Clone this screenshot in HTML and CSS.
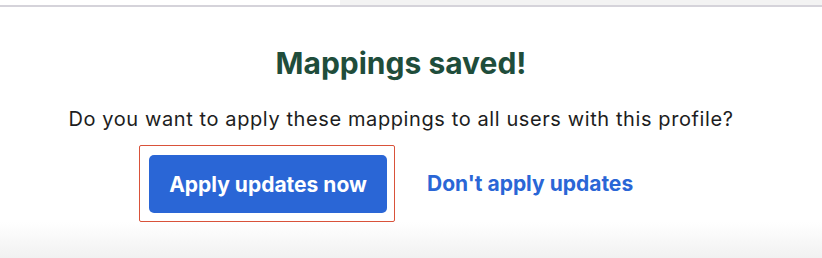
FILE: index.html
```html
<!DOCTYPE html>
<html lang="en">
<head>
  <meta charset="UTF-8">
  <title>Mappings saved</title>
  <link rel="stylesheet" href="styles.css">
</head>
<body>

<!-- top strip -->
<div class="topbar">
  <div class="topbar-left"></div>
  <div class="topbar-right"></div>
</div>

<div class="panel">
  <h2 class="title">Mappings saved!</h2>
  <p class="question">Do you want to apply these mappings to all users with this profile?</p>

  <div class="actions">
    <div class="focus-ring">
      <button class="btn-primary">Apply updates now</button>
    </div>
    <a href="#" class="link">Don't apply updates</a>
  </div>
</div>

</body>
</html>
```

FILE: styles.css
```css
* {
  box-sizing: border-box;
}

body {
  margin: 0;
  height: 258px;
  font-family: Inter, "Noto Sans", Arial, sans-serif;
  background: linear-gradient(to bottom, #fff 0, #fff 222px, #f1f1f1 258px);
  overflow: hidden;
}

/* Top strip */
.topbar {
  display: flex;
  height: 7px;
  border-bottom: 2px solid #d5d3da;
}

.topbar-left {
  width: 340px;
  background: #fff;
}

.topbar-right {
  flex: 1;
  background: #f3f3f3;
}

/* Main panel */
.panel {
  text-align: center;
  padding-right: 20px;
}

.title {
  margin: 36px 0 0;
  font-size: 30px;
  font-weight: 700;
  line-height: 40px;
  color: #1f4d3b;
}

.question {
  margin: 23px 0 0;
  font-size: 20px;
  letter-spacing: 0.6px;
  line-height: 26px;
  color: #1d1d21;
}

.actions {
  display: flex;
  align-items: center;
  margin-top: 13px;
  padding-left: 139px;
}

.focus-ring {
  padding: 9px 7px 8px 9px;
  border: 1px solid #d9523a;
  border-radius: 2px;
}

.btn-primary {
  display: block;
  width: 238px;
  height: 58px;
  background-color: #2a66d6;
  color: white;
  border: none;
  border-radius: 5px;
  font-family: inherit;
  font-size: 21px;
  font-weight: 700;
  cursor: pointer;
}

.link {
  margin-left: 32px;
  color: #2a66d6;
  font-size: 21px;
  font-weight: 700;
  text-decoration: none;
}
```
